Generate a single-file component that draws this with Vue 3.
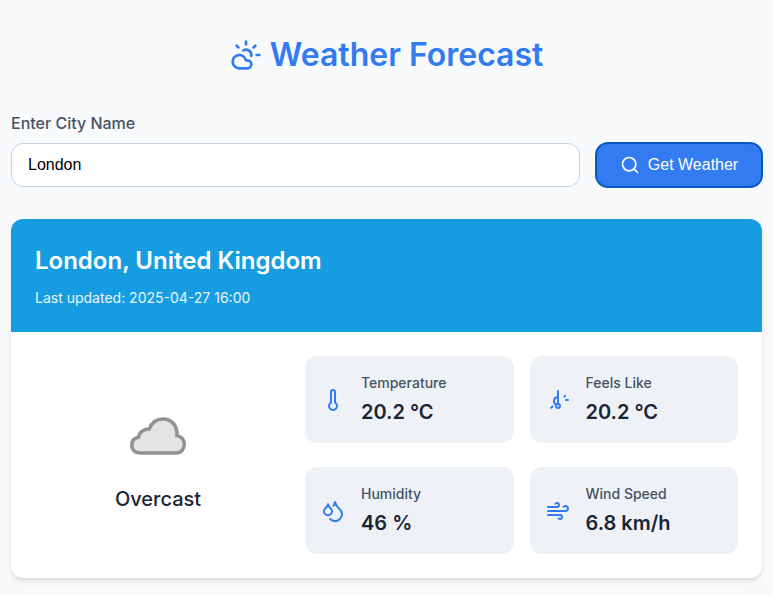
<script setup>
import { ref } from 'vue'

const city = ref('London')

const details = [
  {
    label: 'Temperature',
    value: '20.2 °C',
    paths: ['M14 4v10.54a4 4 0 1 1-4 0V4a2 2 0 0 1 4 0Z'],
  },
  {
    label: 'Feels Like',
    value: '20.2 °C',
    paths: [
      'M12 9a4 4 0 0 0-2 7.5',
      'M12 3v13',
      'm6.6 18.4-1.4 1.4',
      'M14 18a2 2 0 1 1-4 0 2 2 0 0 1 4 0Z',
      'M20 12h2',
      'm19.1 7.7-.7.9',
    ],
  },
  {
    label: 'Humidity',
    value: '46 %',
    paths: [
      'M7 16.3c2.2 0 4-1.83 4-4.05 0-1.16-.57-2.26-1.71-3.19S7.29 6.75 7 5.3c-.29 1.45-1.14 2.84-2.29 3.76S3 11.1 3 12.25c0 2.22 1.8 4.05 4 4.05z',
      'M12.56 6.6A10.97 10.97 0 0 0 14 3.02c.5 2.5 2 4.9 4 6.5s3 3.5 3 5.5a6.98 6.98 0 0 1-11.91 4.97',
    ],
  },
  {
    label: 'Wind Speed',
    value: '6.8 km/h',
    paths: [
      'M17.7 7.7a2.5 2.5 0 1 1 1.8 4.3H2',
      'M9.6 4.6A2 2 0 1 1 11 8H2',
      'M12.6 19.4A2 2 0 1 0 14 16H2',
    ],
  },
]
</script>

<template>
  <main class="page">
    <h1 class="title">
      <svg class="icon title-icon" viewBox="0 0 24 24">
        <path d="M12 2v2" />
        <path d="m4.93 4.93 1.41 1.41" />
        <path d="M20 12h2" />
        <path d="m19.07 4.93-1.41 1.41" />
        <path d="M15.947 12.65a4 4 0 0 0-5.925-4.128" />
        <path d="M13 22H7a5 5 0 1 1 4.9-6H13a3 3 0 0 1 0 6Z" />
      </svg>
      <span>Weather Forecast</span>
    </h1>

    <form class="search" @submit.prevent>
      <label class="label" for="city">Enter City Name</label>
      <div class="row">
        <input id="city" v-model="city" class="input" type="text" />
        <button class="button" type="submit">
          <svg class="icon button-icon" viewBox="0 0 24 24">
            <circle cx="11" cy="11" r="8" />
            <path d="m21 21-4.3-4.3" />
          </svg>
          <span>Get Weather</span>
        </button>
      </div>
    </form>

    <section class="card">
      <header class="card-head">
        <h2 class="place">London, United Kingdom</h2>
        <p class="updated">Last updated: 2025-04-27 16:00</p>
      </header>
      <div class="card-body">
        <div class="condition">
          <svg class="cloud" viewBox="0 0 64 64">
            <path
              d="M14.500 49C8.500 49 5.800 45.500 5.800 41.300C5.800 37 8.500 34 12.500 33.300C12.800 28.500 17.500 24.800 23.300 25C25.500 19 30 15 37 15C45.500 15 51.500 21.500 51 31.500C55.500 32.500 58.300 36 58.300 40.300C58.300 45.300 55.300 49 49.800 49Z"
            />
          </svg>
          <p class="condition-text">Overcast</p>
        </div>
        <div class="details">
          <div v-for="item in details" :key="item.label" class="detail">
            <svg class="icon detail-icon" viewBox="0 0 24 24">
              <path v-for="d in item.paths" :key="d" :d="d" />
            </svg>
            <div>
              <p class="detail-label">{{ item.label }}</p>
              <p class="detail-value">{{ item.value }}</p>
            </div>
          </div>
        </div>
      </div>
    </section>
  </main>
</template>

<style>
body {
  margin: 0;
  background: #f8fafc;
}
</style>

<style scoped>
* {
  box-sizing: border-box;
}
h1, h2, p {
  margin: 0;
}
.page {
  height: 595px;
  padding: 31px 11px 0;
  overflow: hidden;
  background: #f8fafc;
  color: #1a2535;
  font-family: Inter, sans-serif;
}
.icon {
  flex: none;
  fill: none;
  stroke: currentColor;
  stroke-width: 2;
  stroke-linecap: round;
  stroke-linejoin: round;
}
.title {
  display: flex;
  align-items: center;
  justify-content: center;
  gap: 8px;
  height: 48px;
  color: #327bf1;
  font-size: 32px;
  font-weight: 600;
  line-height: 48px;
}
.title-icon {
  width: 32px;
  height: 32px;
}
.search {
  margin-top: 32px;
}
.label {
  display: block;
  height: 24px;
  margin-bottom: 8px;
  color: #465264;
  font-size: 16px;
  font-weight: 500;
  line-height: 24px;
}
.row {
  display: flex;
  gap: 16px;
}
.input {
  flex: 1;
  min-width: 0;
  height: 44px;
  padding: 0 16px;
  border: 1px solid #c6d2e0;
  border-radius: 12px;
  outline: none;
  background: #fff;
  color: #000;
  font: 16px 'Liberation Sans', Arial, sans-serif;
}
.button {
  display: flex;
  align-items: center;
  justify-content: center;
  gap: 8px;
  width: 166px;
  height: 44px;
  padding: 0;
  border: 1px solid #0359c5;
  border-radius: 12px;
  background: #327bf1;
  box-shadow: 0 0 0 1px #0359c5, 0 0 0 2px #fff;
  color: #fff;
  font: 16px 'Liberation Sans', Arial, sans-serif;
}
.button-icon {
  width: 20px;
  height: 20px;
}
.card {
  margin-top: 32px;
  border-radius: 12px;
  overflow: hidden;
  background: #fff;
  box-shadow: 0 4px 6px -1px rgba(0, 0, 0, 0.1), 0 2px 4px -1px rgba(0, 0, 0, 0.06);
}
.card-head {
  height: 113px;
  padding: 24px;
  background: #169de1;
  color: #fff;
}
.place {
  font-size: 24px;
  font-weight: 600;
  line-height: 36px;
}
.updated {
  margin-top: 8px;
  font-size: 14px;
  line-height: 21px;
  opacity: 0.9;
}
.card-body {
  display: flex;
  gap: 24px;
  height: 246px;
  padding: 24px;
}
.condition {
  display: flex;
  flex: none;
  flex-direction: column;
  align-items: center;
  justify-content: center;
  gap: 16px;
  width: 246px;
  padding-top: 8px;
}
.cloud {
  width: 64px;
  height: 64px;
  fill: #e4e3e6;
  stroke: #929292;
  stroke-width: 3.5;
}
.condition-text {
  font-size: 20px;
  font-weight: 500;
  line-height: 30px;
}
.details {
  display: grid;
  flex: 1;
  grid-template-columns: 1fr 1fr;
  grid-template-rows: 87px 87px;
  gap: 24px 16px;
}
.detail {
  display: flex;
  align-items: center;
  gap: 16px;
  padding: 0 16px;
  border-radius: 12px;
  background: #eef2f7;
}
.detail-icon {
  width: 24px;
  height: 24px;
  color: #327bf1;
}
.detail-label {
  color: #465264;
  font-size: 14px;
  font-weight: 500;
  line-height: 21px;
}
.detail-value {
  margin-top: 4px;
  font-size: 20px;
  font-weight: 600;
  line-height: 30px;
}
</style>
